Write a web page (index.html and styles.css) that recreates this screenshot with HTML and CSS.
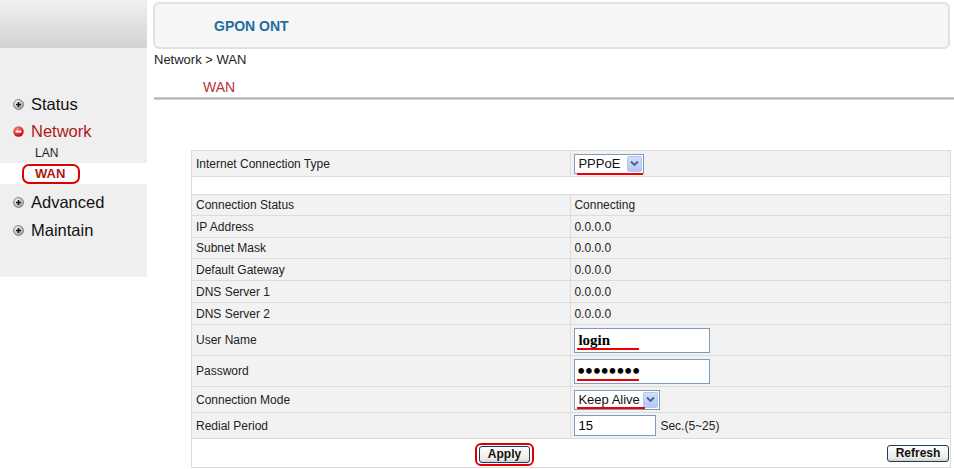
FILE: index.html
```html
<!DOCTYPE html>
<html>
<head>
<meta charset="utf-8">
<title>GPON ONT - WAN</title>
<link rel="stylesheet" href="styles.css">
</head>
<body>
<div class="page">
  <aside class="side">
    <div class="side-head"></div>
    <ul class="menu">
      <li class="item">
        <svg class="ico" width="11" height="11" viewBox="0 0 11 11"><defs><radialGradient id="g1" cx="40%" cy="35%" r="65%"><stop offset="0" stop-color="#ffffff"/><stop offset="1" stop-color="#9a9a9a"/></radialGradient></defs><circle cx="5.5" cy="5.5" r="5" fill="url(#g1)" stroke="#777" stroke-width="0.8"/><path d="M3 5.5h5M5.5 3v5" stroke="#111" stroke-width="1.6"/></svg>
        <span>Status</span>
      </li>
      <li class="item open">
        <svg class="ico" width="11" height="11" viewBox="0 0 11 11"><defs><radialGradient id="g2" cx="40%" cy="30%" r="70%"><stop offset="0" stop-color="#ff8a8a"/><stop offset="1" stop-color="#c80000"/></radialGradient></defs><circle cx="5.5" cy="5.5" r="5.2" fill="url(#g2)"/><path d="M2.6 5.6h5.8" stroke="#fff" stroke-width="1.8"/></svg>
        <span>Network</span>
      </li>
      <li class="sub">LAN</li>
      <li class="sub cur"><span class="mark">WAN</span></li>
      <li class="item">
        <svg class="ico" width="11" height="11" viewBox="0 0 11 11"><circle cx="5.5" cy="5.5" r="5" fill="url(#g1)" stroke="#777" stroke-width="0.8"/><path d="M3 5.5h5M5.5 3v5" stroke="#111" stroke-width="1.6"/></svg>
        <span>Advanced</span>
      </li>
      <li class="item">
        <svg class="ico" width="11" height="11" viewBox="0 0 11 11"><circle cx="5.5" cy="5.5" r="5" fill="url(#g1)" stroke="#777" stroke-width="0.8"/><path d="M3 5.5h5M5.5 3v5" stroke="#111" stroke-width="1.6"/></svg>
        <span>Maintain</span>
      </li>
    </ul>
  </aside>
  <main class="main">
    <div class="banner"><span class="brand">GPON ONT</span></div>
    <div class="crumb">Network &gt; WAN</div>
    <div class="title">WAN</div>
    <div class="rule"></div>
    <table class="grid">
      <tr class="r26">
        <td class="c1">Internet Connection Type</td>
        <td class="c2">
          <span class="sel w70"><span class="sel-text">PPPoE</span><span class="arrow"><svg width="9" height="7" viewBox="0 0 9 7"><path d="M1 1.5l3.5 3.5 3.5-3.5" fill="none" stroke="#4d6185" stroke-width="1.8"/></svg></span><span class="redline r-sel"></span></span>
        </td>
      </tr>
      <tr class="blank"><td colspan="2"></td></tr>
      <tr class="r21"><td class="c1">Connection Status</td><td class="c2">Connecting</td></tr>
      <tr class="r22"><td class="c1">IP Address</td><td class="c2">0.0.0.0</td></tr>
      <tr class="r21"><td class="c1">Subnet Mask</td><td class="c2">0.0.0.0</td></tr>
      <tr class="r22"><td class="c1">Default Gateway</td><td class="c2">0.0.0.0</td></tr>
      <tr class="r22"><td class="c1">DNS Server 1</td><td class="c2">0.0.0.0</td></tr>
      <tr class="r22"><td class="c1">DNS Server 2</td><td class="c2">0.0.0.0</td></tr>
      <tr class="r31">
        <td class="c1">User Name</td>
        <td class="c2"><span class="fld"><input class="inp bold" type="text" value="login"><span class="redline r-inp"></span></span></td>
      </tr>
      <tr class="r31">
        <td class="c1">Password</td>
        <td class="c2"><span class="fld"><input class="inp bold pass" type="password" value="12345678"><span class="redline r-inp"></span></span></td>
      </tr>
      <tr class="r26">
        <td class="c1">Connection Mode</td>
        <td class="c2">
          <span class="sel w86"><span class="sel-text">Keep Alive</span><span class="arrow"><svg width="9" height="7" viewBox="0 0 9 7"><path d="M1 1.5l3.5 3.5 3.5-3.5" fill="none" stroke="#4d6185" stroke-width="1.8"/></svg></span><span class="redline r-sel2"></span></span>
        </td>
      </tr>
      <tr class="r26">
        <td class="c1">Redial Period</td>
        <td class="c2"><input class="inp small" type="text" value="15"><span class="unit">Sec.(5~25)</span></td>
      </tr>
      <tr class="btnrow">
        <td colspan="2">
          <div class="btns">
            <span class="circ"><button class="btn apply">Apply</button></span>
            <button class="btn refresh">Refresh</button>
          </div>
        </td>
      </tr>
    </table>
  </main>
</div>
</body>
</html>
```
FILE: styles.css
```css
* { box-sizing: border-box; }
html, body { margin: 0; padding: 0; background: #fff; }
body { font-family: "Liberation Sans", Arial, sans-serif; color: #222; width: 954px; height: 469px; overflow: hidden; }

.page { display: flex; align-items: flex-start; }

.side { width: 147px; flex: none; background: #efefef; height: 277px; }
.side-head { height: 48px; background: linear-gradient(#f1f1f1, #d2d2d2); }
.menu { list-style: none; margin: 0; padding: 42px 0 0 0; }
.item { display: flex; align-items: center; height: 28px; padding-left: 13px; font-size: 16.5px; color: #111; }
.item .ico { margin-right: 7px; flex: none; }
.item.open { height: 26px; color: #b01818; }
.sub { height: 19px; line-height: 19px; padding-left: 35px; font-size: 12px; color: #222; }
.sub.cur { background: #fff; height: 21px; padding-left: 22px; display: flex; align-items: center; margin-bottom: 4px; }
.mark { display: inline-block; border: 2px solid #e00000; border-radius: 7px; padding: 0 11px; height: 20px; line-height: 16px; font-size: 13px; font-weight: bold; color: #b01818; width: 58px; }

.main { flex: 1; padding-left: 6px; }
.banner { margin-top: 2px; width: 797px; height: 47px; border: 2px solid #e1e1e1; border-radius: 6px; background: #f6f6f6; display: flex; align-items: center; padding-left: 59px; }
.brand { font-size: 14px; font-weight: bold; color: #1f6d9e; }
.crumb { height: 22px; line-height: 22px; font-size: 13px; color: #222; padding-left: 1px; }
.title { margin-top: 8px; height: 16px; line-height: 16px; font-size: 14px; color: #b83232; padding-left: 50px; }
.rule { margin-top: 2px; margin-left: 1px; height: 3px; background: linear-gradient(#d2d2d2, #b5b5b5 50%, #e0e0e0); }

.grid { margin-top: 50px; margin-left: 38px; width: 760px; border-collapse: collapse; font-size: 12px; color: #222; }
.grid td { border: 1px solid #dcdcdc; background: #f2f2f2; padding: 0 4px; vertical-align: middle; }
.grid .c1 { width: 380px; }
.grid .c2 { width: 380px; padding-left: 3px; }
.r21 { height: 21px; }
.r22 { height: 22px; }
.r26 { height: 26px; }
.r31 { height: 31px; }
.grid .blank td { height: 18px; background: #fff; }
.grid .btnrow td { height: 28px; background: #fff; padding: 0; }

.sel { position: relative; display: inline-flex; align-items: center; justify-content: space-between; height: 20px; border: 1px solid #7f9db9; background: #fff; vertical-align: middle; padding: 0 1px 0 3px; font-size: 13px; color: #111; }
.w70 { width: 70px; }
.w86 { width: 86px; }
.arrow { width: 15px; height: 16px; border: 1px solid #b3c6f2; border-radius: 2px; background: linear-gradient(#d2defc, #b4c8f6); display: flex; align-items: center; justify-content: center; }
.redline { position: absolute; height: 2px; background: #ee0000; }
.r-sel { left: 2px; right: 0; bottom: -2px; }
.r-sel2 { left: 2px; right: 14px; bottom: 0px; }

.fld { position: relative; display: inline-block; vertical-align: middle; }
.inp { display: block; border: 1px solid #7f9db9; background: #fff; height: 25px; width: 136px; padding: 0 3px; margin: 0; font-family: "Liberation Serif", "Times New Roman", serif; font-size: 15px; color: #000; outline: none; }
.inp.bold { font-weight: bold; }
.inp.pass { font-size: 21px; padding: 0 2px; letter-spacing: 0.5px; }
.r-inp { left: 3px; width: 62px; top: 20px; }
.inp.small { display: inline-block; vertical-align: middle; width: 82px; height: 21px; font-family: "Liberation Sans", Arial, sans-serif; font-size: 13px; padding: 0 3px; }
.unit { margin-left: 4px; font-size: 12px; vertical-align: middle; }

.btns { display: flex; align-items: center; height: 28px; padding-left: 283px; padding-right: 1px; }
.circ { display: inline-block; border: 2px solid #e00000; border-radius: 6px; padding: 1px 2px; margin-top: 3px; }
.btn { display: block; height: 17px; border: 1px solid #1c3d5f; border-radius: 3px; background: linear-gradient(#ffffff, #ecebe6 80%, #d6d0c5); font-family: "Liberation Sans", Arial, sans-serif; font-size: 12px; font-weight: bold; color: #111; padding: 0; margin: 0; line-height: 15px; }
.apply { width: 51px; }
.refresh { width: 62px; margin-left: auto; }
```
